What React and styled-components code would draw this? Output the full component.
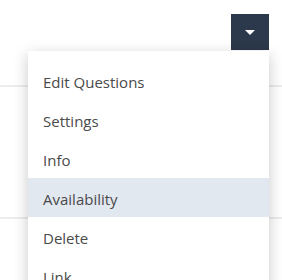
import React from "react";
import styled, { createGlobalStyle } from "styled-components";

const Global = createGlobalStyle`
  body {
    margin: 0;
    background: #ffffff;
    font-family: "Open Sans", "Liberation Sans", sans-serif;
  }
`;

const Page = styled.div`
  position: relative;
  width: 282px;
  height: 280px;
  overflow: hidden;
  background: #fff;
`;

const Toolbar = styled.div`
  display: flex;
  justify-content: flex-end;
  padding: 14px 13px 0 0;
  height: 36px;
`;

const ToggleButton = styled.button`
  width: 38px;
  height: 36px;
  border: none;
  padding: 0;
  background: #2c384b;
  display: flex;
  align-items: center;
  justify-content: center;
  cursor: pointer;
`;

const Caret = styled.span`
  width: 0;
  height: 0;
  border-left: 5px solid transparent;
  border-right: 5px solid transparent;
  border-top: 5px solid #ffffff;
  margin-top: 1px;
`;

const Row = styled.div`
  height: ${(p) => p.h}px;
  border-bottom: 2px solid #ececec;
`;

const Menu = styled.ul`
  position: absolute;
  top: 51px;
  left: 28px;
  width: 241px;
  margin: 0;
  padding: 10px 0 0;
  list-style: none;
  background: #fff;
  box-shadow: 0 4px 14px rgba(0, 0, 0, 0.22);
`;

const Item = styled.li`
  box-sizing: border-box;
  height: 39px;
  padding: 4px 0 0 15px;
  line-height: 35px;
  font-size: 15px;
  color: #4a4a4a;
  background: ${(p) => (p.active ? "#e2e8f0" : "transparent")};
  cursor: pointer;
`;

const items = ["Edit Questions", "Settings", "Info", "Availability", "Delete", "Link"];

export default function App() {
  return (
    <Page>
      <Global />
      <Toolbar>
        <ToggleButton>
          <Caret />
        </ToggleButton>
      </Toolbar>
      <Row h={35} />
      <Row h={130} />
      <Menu>
        {items.map((t) => (
          <Item key={t} active={t === "Availability"}>
            {t}
          </Item>
        ))}
      </Menu>
    </Page>
  );
}
